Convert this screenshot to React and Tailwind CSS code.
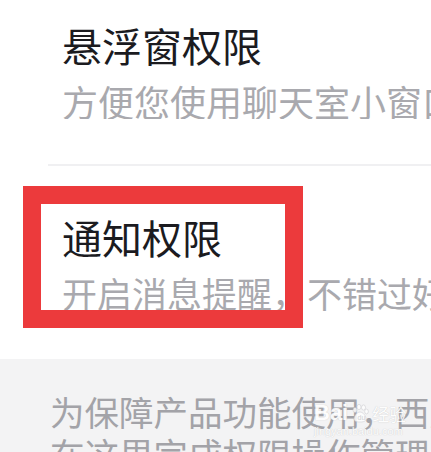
import React from "react";

const cjk = { fontFamily: '"Noto Sans CJK SC", "Noto Sans", sans-serif' };

function PermissionItem({ title, desc, descSize }) {
  return (
    <div className="pl-[62px] overflow-hidden">
      <div className="text-[40px] leading-[40px] text-[#1b1b1f] whitespace-nowrap">{title}</div>
      <div className={"mt-[18px] leading-[36px] text-[#a9a9ae] whitespace-nowrap " + descSize}>{desc}</div>
    </div>
  );
}

export default function App() {
  return (
    <div className="relative w-[431px] h-[452px] overflow-hidden bg-white" style={cjk}>
      <div className="pt-[25px]">
        <PermissionItem title="悬浮窗权限" desc="方便您使用聊天室小窗口模式" descSize="text-[36px]" />
      </div>

      <div className="ml-[48px] mt-[45px] h-[2px] bg-[#f0f0f2]" />

      <div className="pt-[51px]">
        <PermissionItem title="通知权限" desc="开启消息提醒，不错过好友消息" descSize="text-[35px]" />
      </div>

      <div className="mt-[48px] h-[100px] bg-[#f3f3f4] pl-[50px] pt-[31px] overflow-hidden">
        <div className="text-[34.5px] leading-[42px] text-[#a3a3a8] whitespace-nowrap">为保障产品功能使用，西瓜</div>
        <div className="text-[34.5px] leading-[42px] text-[#a3a3a8] whitespace-nowrap">在这里完成权限操作管理</div>
      </div>

      {/* red highlight box */}
      <div className="absolute left-[23px] top-[186px] w-[280px] h-[142px] border-[18px] border-[#ec3a3c]" />

      {/* watermark */}
      <div className="absolute left-[314px] top-[402px] flex flex-col items-start text-white opacity-90 pointer-events-none">
        <div className="flex items-center gap-[2px] leading-none">
          <span className="text-[22px] font-bold [text-shadow:0_0_1px_#bbb]" style={{ fontFamily: '"Liberation Sans", sans-serif' }}>Bai</span>
          <svg width="20" height="20" viewBox="0 0 20 20" className="opacity-90">
            <g fill="#fff" stroke="#c8c8cc" strokeWidth="0.6">
              <ellipse cx="5" cy="7" rx="2" ry="2.6" />
              <ellipse cx="9" cy="4" rx="2" ry="2.6" />
              <ellipse cx="13.5" cy="4.5" rx="2" ry="2.6" />
              <ellipse cx="16.5" cy="8.5" rx="1.8" ry="2.4" />
              <path d="M10 9c-3 0-6 4-6 7 0 2 2 3 6 3s6-1 6-3c0-3-3-7-6-7z" />
            </g>
            <text x="7.5" y="17" fontSize="7" fill="#c8c8cc" fontFamily="Liberation Sans">du</text>
          </svg>
          <span className="text-[17px] [text-shadow:0_0_1px_#bbb]">经验</span>
        </div>
        <div className="text-[11px] leading-none mt-[2px] [text-shadow:0_0_1px_#bbb]" style={{ fontFamily: '"Liberation Sans", sans-serif' }}>jingyan.baidu.com</div>
      </div>
    </div>
  );
}
